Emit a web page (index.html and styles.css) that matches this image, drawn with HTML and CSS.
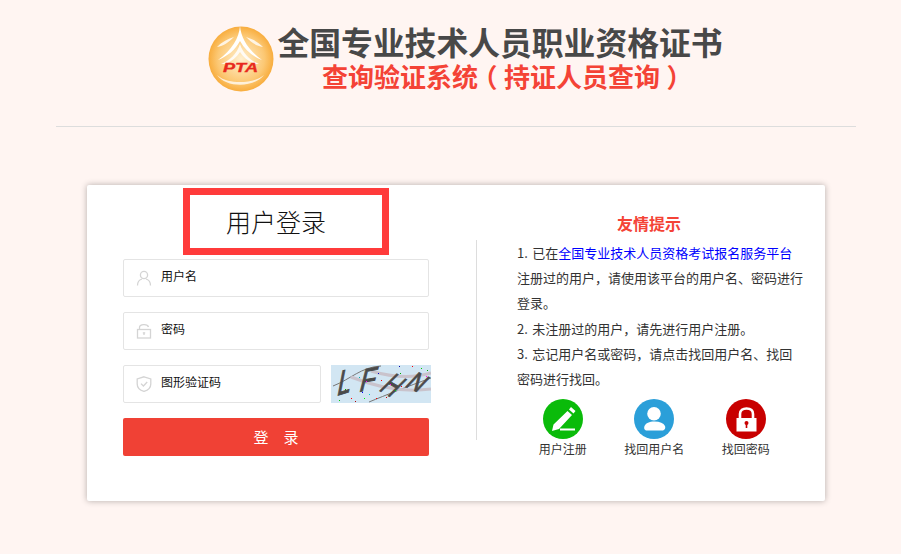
FILE: index.html
```html
<!DOCTYPE html>
<html lang="zh-CN">
<head>
  <meta charset="UTF-8" />
  <title>全国专业技术人员职业资格证书查询验证系统</title>
  <link rel="stylesheet" href="styles.css">
</head>
<body>
  <header class="top">
    <svg class="logo" viewBox="0 0 66 66" width="66" height="66">
      <defs>
        <radialGradient id="sun" cx="50%" cy="50%" r="50%">
          <stop offset="0" stop-color="#fff0d0" />
          <stop offset="0.72" stop-color="#fcc874" />
          <stop offset="1" stop-color="#f8ad3e" />
        </radialGradient>
      </defs>
      <circle cx="33" cy="33" r="32.5" fill="url(#sun)" />
      <path d="M32 0 C31 12 24 24 10 34 C20 30 27 24 32 15 C37 24 44 30 54 34 C40 24 33 12 32 0Z" fill="#fff" />
      <path d="M32 18 C29 28 21 35 13 38 L18 38 C24 35 29 31 32 26 C35 31 40 35 46 38 L51 38 C43 35 35 28 32 18Z" fill="#fff" opacity="0.85" />
      <path d="M9 21 C14 16 19 13 26 11 C21 16 16 20 9 21Z M55 21 C50 16 45 13 38 11 C43 16 48 20 55 21Z" fill="#fff" opacity="0.8" />
      <path d="M9 49 C18 62 46 62 56 49 C48 55 40 56 32 56 C24 56 16 55 9 49Z" fill="#fff" opacity="0.75" />
      <text class="logo-text" x="15" y="46" textLength="35" lengthAdjust="spacingAndGlyphs">PTA</text>
    </svg>
    <div class="top-text">
      <h1>全国专业技术人员职业资格证书</h1>
      <h2>查询验证系统<span class="paren">（</span>持证人员查询<span class="paren">）</span></h2>
    </div>
  </header>
  <hr class="top-line" />

  <main class="card">
    <section class="login">
      <div class="login-title">用户登录</div>

      <label class="field">
        <svg viewBox="0 0 16 16" width="16" height="16" class="field-icon">
          <circle cx="8" cy="5" r="3.6" />
          <path d="M1.5 15.5 C1.5 11.5 4 9.6 6 9 M14.5 15.5 C14.5 11.5 12 9.6 10 9" />
        </svg>
        <input type="text" placeholder="用户名" />
      </label>

      <label class="field">
        <svg viewBox="0 0 16 16" width="16" height="16" class="field-icon">
          <path d="M3.5 6.5 V4.5 C3.5 1 11.5 0.5 12.5 4" />
          <rect x="1.5" y="6.5" width="13" height="8.5" />
          <path d="M8 9.5 V12 M6.8 9.8 H9.2" />
        </svg>
        <input type="password" placeholder="密码" />
      </label>

      <div class="code-row">
        <label class="field field-code">
          <svg viewBox="0 0 16 16" width="16" height="16" class="field-icon">
            <path d="M8 0.8 L14.8 3 V8 C14.8 12 11 14.5 8 15.4 C5 14.5 1.2 12 1.2 8 V3Z" />
            <path d="M5 7.6 L7.4 10 L11.2 6" />
          </svg>
          <input type="text" placeholder="图形验证码" />
        </label>
        <svg class="captcha" viewBox="0 0 100 38" width="100" height="38">
          <rect width="100" height="38" fill="#d2e6f3" />
          <path d="M2 21 C20 14 30 2 50 1 M38 37 C55 30 75 22 100 13" fill="none" stroke="#777" stroke-width="1" />
          <path d="M20 12 C40 20 70 28 100 24 M40 6 C60 12 80 14 100 8" fill="none" stroke="#c9c3cc" stroke-width="3" />
          <text class="captcha-char" font-size="28" transform="translate(5 31) rotate(-17) skewX(-28) scale(0.9 1.15)">L</text>
          <text class="captcha-char" font-size="28" transform="translate(27 27) rotate(-10) skewX(-24) scale(0.95 1.1)">F</text>
          <text class="captcha-char" font-size="34" transform="translate(47 25) rotate(30) skewX(-15) scale(0.62 1)">H</text>
          <text class="captcha-char" font-size="27" transform="translate(73 21) rotate(25) skewX(-18) scale(0.8 1)">N</text>
          <g class="noise">
            <rect x="14" y="24" width="1" height="1" fill="#0a0" />
            <rect x="20" y="33" width="1" height="1" fill="#f00" />
            <rect x="8" y="35" width="1" height="1" fill="#0c0" />
            <rect x="24" y="36" width="1" height="1" fill="#a00" />
            <rect x="28" y="12" width="1" height="1" fill="#0aa" />
            <rect x="31" y="27" width="1" height="1" fill="#00f" />
            <rect x="35" y="16" width="1" height="1" fill="#f0f" />
            <rect x="38" y="29" width="1" height="1" fill="#0cc" />
            <rect x="47" y="8" width="1" height="1" fill="#00c" />
            <rect x="50" y="15" width="1" height="1" fill="#f00" />
            <rect x="45" y="33" width="1" height="1" fill="#f00" />
            <rect x="55" y="32" width="1" height="1" fill="#c00" />
            <rect x="59" y="19" width="1" height="1" fill="#f0f" />
            <rect x="69" y="8" width="1" height="1" fill="#0a0" />
            <rect x="68" y="1" width="1" height="1" fill="#00a" />
            <rect x="81" y="1" width="1" height="1" fill="#f00" />
            <rect x="70" y="21" width="1" height="1" fill="#f00" />
            <rect x="90" y="3" width="1" height="1" fill="#0c0" />
            <rect x="96" y="5" width="1" height="1" fill="#0a0" />
            <rect x="95" y="11" width="1" height="1" fill="#f0f" />
            <rect x="64" y="25" width="1" height="1" fill="#0c0" />
            <rect x="33" y="33" width="1" height="1" fill="#0f0" />
          </g>
        </svg>
      </div>

      <button class="login-btn" type="button">登　录</button>
    </section>

    <section class="tips">
      <h3>友情提示</h3>
      <div class="tips-body">
        <p>1. 已在<a href="#">全国专业技术人员资格考试报名服务平台</a>注册过的用户，请使用该平台的用户名、密码进行登录。</p>
        <p>2. 未注册过的用户，请先进行用户注册。</p>
        <p>3. 忘记用户名或密码，请点击找回用户名、找回密码进行找回。</p>

        <div class="links">
          <a class="link-item" href="#">
            <svg viewBox="0 0 40 40" width="40" height="40">
              <circle cx="20" cy="20" r="20" fill="#0abb0a" />
              <path d="M28 8 L32.5 12 L30.5 14.5 L26 10.5Z M24.5 12 L29 16 L16 30 L9 32 L10.5 25.5Z" fill="#fff" />
              <rect x="17" y="29.5" width="15" height="2" fill="#fff" />
            </svg>
            <span>用户注册</span>
          </a>
          <a class="link-item" href="#">
            <svg viewBox="0 0 40 40" width="40" height="40">
              <circle cx="20" cy="20" r="20" fill="#2b9fd9" />
              <circle cx="20" cy="14.7" r="6.8" fill="#fff" />
              <path d="M13 31.5 C10 31.5 9.8 29 10.5 27 C12 24 15 22.5 20.5 22.5 C26 22.5 29.5 24 31 27 C31.7 29 31 31.5 28 31.5Z" fill="#fff" />
            </svg>
            <span>找回用户名</span>
          </a>
          <a class="link-item" href="#">
            <svg viewBox="0 0 40 40" width="40" height="40">
              <circle cx="20" cy="20" r="20" fill="#c80000" />
              <path d="M14 19 V15 C14 11 17 9.5 20.5 9.5 C24 9.5 27 11 27 15 V19" fill="none" stroke="#fff" stroke-width="2.6" />
              <rect x="10.5" y="19" width="20" height="13.5" fill="#fff" />
              <circle cx="20.5" cy="24" r="2" fill="#c80000" />
              <rect x="19.7" y="24" width="1.6" height="5" fill="#c80000" />
            </svg>
            <span>找回密码</span>
          </a>
        </div>
      </div>
    </section>
  </main>
</body>
</html>
```

FILE: styles.css
```css
* {
  box-sizing: border-box;
}

body {
  margin: 0;
  min-height: 100vh;
  background: #fff5f2;
  color: #333;
  font-family: "Noto Sans CJK SC", "Liberation Sans", sans-serif;
}

/* header */
.top {
  display: flex;
  align-items: center;
  gap: 3px;
  padding: 26px 0 0 208px;
  height: 92px;
}

.logo {
  flex: none;
}

.logo-text {
  font-family: "Liberation Sans", sans-serif;
  font-size: 12px;
  font-weight: bold;
  font-style: italic;
  fill: #e8291c;
  stroke: #e8291c;
  stroke-width: 0.3;
}

.top-text {
  width: 446px;
  margin-top: -2px;
  text-align: center;
}

.top-text h1 {
  margin: 0;
  font-size: 31.8px;
  line-height: 36px;
  font-weight: bold;
  color: #484848;
  white-space: nowrap;
}

.top-text h2 {
  margin: 0;
  padding-left: 8px;
  font-size: 26px;
  line-height: 34px;
  font-weight: bold;
  color: #f44336;
  white-space: nowrap;
}

/* half width brackets with even space, so they sit in the middle of the cell */
.paren {
  margin: 0 6.5px;
  font-feature-settings: "halt";
}

.top-line {
  width: 800px;
  height: 1px;
  margin: 34px 0 0 56px;
  border: 0;
  background: #ddd;
}

/* card */
.card {
  display: flex;
  width: 738px;
  height: 316px;
  margin: 58px 0 0 87px;
  background: #fff;
  border-radius: 2px;
  box-shadow: 0 0 6px rgba(0, 0, 0, 0.3);
}

.login {
  flex: none;
  width: 306px;
  margin: 3px 0 0 36px;
}

.login-title {
  width: 206px;
  height: 67px;
  margin: 0 0 4px 60px;
  padding-right: 20px;
  border: 7px solid #ff3b3b;
  font-size: 25px;
  line-height: 53px;
  font-weight: 300;
  text-align: center;
  color: #111;
}

.field {
  display: flex;
  align-items: center;
  height: 38px;
  margin-bottom: 15px;
  padding-left: 12px;
  background: #fff;
  border: 1px solid #e4e4e4;
  border-radius: 2px;
}

.field input {
  flex: 1;
  min-width: 0;
  height: 34px;
  margin: -5px 0 0 9px;
  padding: 0;
  border: 0;
  outline: 0;
  background: transparent;
  font-family: inherit;
  font-size: 12px;
}

.field input::placeholder {
  color: #111;
  opacity: 1;
}

.field-icon {
  flex: none;
  fill: none;
  stroke: #d4d4d4;
  stroke-width: 1.3;
}

.code-row {
  display: flex;
  gap: 10px;
  width: 308px;
}

.field-code {
  flex: none;
  width: 198px;
}

.captcha {
  flex: none;
}

.captcha-char {
  font-family: "Liberation Sans", sans-serif;
  fill: #4a4a4a;
  stroke: #4a4a4a;
  stroke-width: 0.8;
}

.login-btn {
  display: block;
  width: 100%;
  height: 38px;
  padding: 0 0 2px;
  border: 0;
  border-radius: 2px;
  background: #f04135;
  color: #fff;
  font-family: inherit;
  font-size: 15px;
}

/* right side */
.tips {
  flex: none;
  width: 346px;
  margin-left: 47px;
}

.tips h3 {
  margin: 28px 0 7px;
  font-size: 16px;
  line-height: 20px;
  font-weight: bold;
  color: #f44336;
  text-align: center;
}

.tips-body {
  width: 328px;
  height: 200px;
  padding-left: 40px;
  border-left: 1px solid #ddd;
  font-size: 13px;
  line-height: 25.2px;
  color: #333;
}

.tips-body p {
  margin: 0;
  word-spacing: 1.5px;
}

.tips-body p a {
  color: #00f;
  text-decoration: none;
}

.links {
  display: flex;
  margin-top: 8px;
}

.link-item {
  display: flex;
  flex-direction: column;
  align-items: center;
  gap: 2px;
  width: 91.5px;
  color: #333;
  font-size: 12px;
  line-height: 16px;
  text-decoration: none;
  white-space: nowrap;
}
```
